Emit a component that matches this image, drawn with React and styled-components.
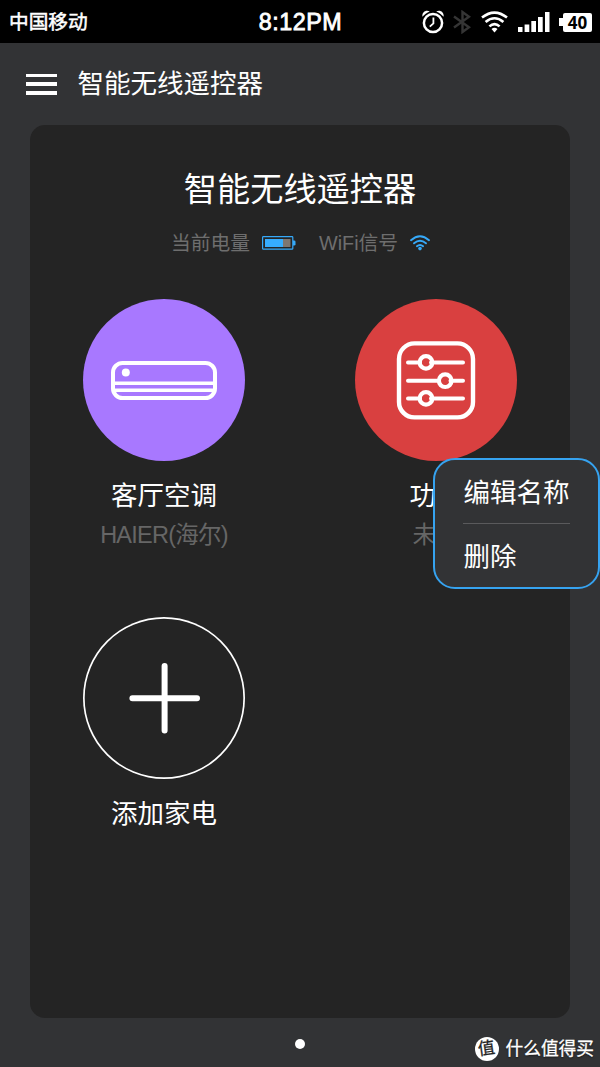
import React from 'react';
import styled, { createGlobalStyle } from 'styled-components';

const GlobalStyle = createGlobalStyle`
  * {
    box-sizing: border-box;
  }

  body {
    margin: 0;
    background-color: #323335;
    font-family: 'Liberation Sans', 'Noto Sans CJK SC', sans-serif;
  }
`;

const Screen = styled.div`
  width: 600px;
  height: 1067px;
  display: flex;
  flex-direction: column;
  position: relative;
  overflow: hidden;
  background-color: #323335;
  color: #ffffff;
  white-space: nowrap;
`;

const StatusBar = styled.div`
  height: 43px;
  padding: 0 8px 0 9px;
  display: grid;
  grid-template-columns: 1fr auto 1fr;
  align-items: center;
  background-color: #000000;
`;

const Carrier = styled.span`
  font-size: 19.7px;
  line-height: 43px;
  -webkit-text-stroke: 0.5px #ffffff;
`;

const Clock = styled.span`
  font-family: 'Liberation Sans', sans-serif;
  font-size: 23.3px;
  line-height: 45px;
  letter-spacing: 0.5px;
  -webkit-text-stroke: 0.8px #ffffff;
`;

const StatusIcons = styled.div`
  padding-bottom: 1px;
  display: flex;
  justify-content: flex-end;
  align-items: center;
`;

const Header = styled.header`
  height: 82px;
  padding: 0 26px;
  display: flex;
  align-items: center;
  gap: 20.5px;
`;

const MenuButton = styled.button`
  width: 31px;
  height: 21px;
  padding: 0;
  border: none;
  background: transparent;
  display: flex;
  flex-direction: column;
  justify-content: space-between;
`;

const MenuLine = styled.span`
  height: 3.5px;
  background-color: #ffffff;
`;

const HeaderTitle = styled.h1`
  margin: 0;
  font-size: 26.5px;
  line-height: 40px;
  font-weight: 400;
`;

const Card = styled.main`
  height: 893px;
  margin: 0 30px;
  padding-top: 40px;
  border-radius: 15px;
  background-color: #242424;
`;

const CardTitle = styled.h2`
  margin: 0;
  font-size: 33.2px;
  line-height: 50px;
  font-weight: 400;
  text-align: center;
`;

const DeviceInfo = styled.div`
  height: 30px;
  margin-top: 13px;
  padding-left: 141px;
  display: flex;
  align-items: center;
  color: #6e6e6e;
  font-size: 19.8px;
  line-height: 30px;
`;

const InfoItem = styled.div`
  width: ${(props) => props.$width}px;
  display: flex;
  align-items: center;
  gap: 12px;
`;

const Appliances = styled.div`
  margin: 41px 53px 0;
  display: grid;
  grid-template-columns: 162px 162px;
  grid-auto-rows: 318px;
  justify-content: space-between;
`;

const Appliance = styled.div`
  display: flex;
  flex-direction: column;
  align-items: center;
`;

const Circle = styled.div`
  width: 162px;
  height: 162px;
  flex: none;
  display: flex;
  align-items: center;
  justify-content: center;
  border-radius: 50%;
  background-color: ${(props) => props.$color || 'transparent'};
  box-shadow: ${(props) => (props.$outlined ? 'inset 0 0 0 1.7px #ffffff' : 'none')};
`;

const Name = styled.div`
  margin-top: 15px;
  font-size: 26.5px;
  line-height: 40px;
`;

const Brand = styled.div`
  font-size: 23.5px;
  line-height: 38px;
  letter-spacing: ${(props) => (props.$tight ? '-0.75px' : '0')};
  color: #666666;
`;

const Menu = styled.div`
  position: absolute;
  left: 433px;
  top: 458px;
  width: 167px;
  height: 131px;
  padding: 0 28px;
  border: 2px solid #36a3f0;
  border-radius: 22px;
  background-color: #323335;
`;

const MenuItem = styled.div`
  height: 63px;
  padding-left: 0.5px;
  font-size: 26.5px;
  line-height: 66px;

  & + & {
    border-top: 1px solid #5a5a5c;
  }
`;

const Footer = styled.footer`
  flex: 1;
  padding: 0 6px 0 0;
  display: grid;
  grid-template-columns: 1fr 10px 1fr;
  align-items: center;
`;

const PageDot = styled.span`
  grid-column: 2;
  width: 10px;
  height: 10px;
  margin: 3px 0 0 3px;
  border-radius: 50%;
  background-color: #ffffff;
`;

const Watermark = styled.div`
  padding-top: 12px;
  display: flex;
  align-items: center;
  justify-content: flex-end;
  gap: 7px;
  font-size: 17.7px;
  line-height: 26px;
  -webkit-text-stroke: 0.3px currentColor;
  text-shadow: 0 1px 2px rgba(0, 0, 0, 0.7);
`;

const Badge = styled.span`
  width: 24px;
  height: 24px;
  border-radius: 50%;
  background-color: #ffffff;
  color: #222222;
  font-size: 17px;
  line-height: 23px;
  text-align: center;
  text-shadow: none;
`;

const BadgeText = styled.span`
  display: inline-block;
  transform: rotate(-8deg);
`;

const BatteryBadge = styled.div`
  width: 33px;
  height: 19px;
  margin-left: 9px;
  display: flex;
  align-items: center;
`;

const BatteryTip = styled.span`
  width: 4px;
  height: 8px;
  background-color: #ffffff;
`;

const BatteryBody = styled.span`
  width: 29px;
  height: 19px;
  border-radius: 2px;
  background-color: #ffffff;
  color: #000000;
  font-family: 'Open Sans', 'Noto Sans', sans-serif;
  font-size: 17px;
  line-height: 19px;
  font-weight: 700;
  text-align: center;
`;

const AlarmIcon = () => (
  <svg width="22" height="24" viewBox="0 0 22 24" fill="none" stroke="#fff">
    <circle cx="11" cy="13" r="9.1" strokeWidth="2.5" />
    <path d="M11.4 7.5v5.8l-3.6 3.4" strokeWidth="1.8" />
    <path d="M0.4 6.8C-0.2 2.4 3.4-0.6 7.8 1.4C4.8 2.6 2.4 4.4 0.4 6.8zM21.6 6.8C22.2 2.4 18.6-0.6 14.2 1.4C17.2 2.6 19.6 4.4 21.6 6.8z" fill="#fff" stroke="none" />
  </svg>
);

const BluetoothIcon = () => (
  <svg width="18" height="24" viewBox="0 0 18 24" fill="none" stroke="#353535" strokeWidth="2.4" style={{ marginLeft: 9 }}>
    <path d="M1 6.5l15 10.8-6.5 4.7V2l6.5 4.7L1 17.5" />
  </svg>
);

const StatusWifiIcon = () => (
  <svg width="27" height="24" viewBox="0 0 27 24" fill="none" stroke="#fff" strokeWidth="2.6" style={{ marginLeft: 10 }}>
    <path d="M1 7.6Q13.5 -2.4 26 7.6" />
    <path d="M4.6 12.1Q13.5 4.4 22.4 12.1" />
    <path d="M8.4 16.4Q13.5 11.8 18.6 16.4" />
    <path d="M10.5 19Q13.5 16.6 16.5 19L13.5 22.4z" fill="#fff" stroke="none" />
  </svg>
);

const SignalIcon = () => (
  <svg width="32" height="20" viewBox="0 0 32 20" fill="#fff" style={{ marginLeft: 10 }}>
    <rect x="0" y="15" width="4.5" height="5" />
    <rect x="6.6" y="12.5" width="4.7" height="7.5" />
    <rect x="13.3" y="9" width="4.7" height="11" />
    <rect x="20" y="5" width="4.7" height="15" />
    <rect x="27" y="0" width="4.5" height="20" />
  </svg>
);

const BatteryIcon = () => (
  <svg width="34" height="14" viewBox="0 0 34 14">
    <rect x="0.6" y="0.6" width="30.2" height="12.6" rx="0.8" fill="none" stroke="#36a9f8" strokeWidth="1.2" />
    <rect x="3" y="3" width="18" height="8" fill="#36adff" />
    <rect x="21" y="3" width="7.5" height="8" fill="#7d7772" />
    <path d="M31 4.5h1.2a1.3 1.3 0 0 1 1.3 1.3v2.4a1.3 1.3 0 0 1-1.3 1.3H31z" fill="#36a9f8" />
  </svg>
);

const WifiIcon = () => (
  <svg width="20" height="16" viewBox="0 0 20 16" fill="none" stroke="#36a9f8" strokeWidth="1.9" strokeLinecap="round">
    <path d="M1 5.2Q10 -2.8 19 5.2" />
    <path d="M4 8.3Q10 3.1 16 8.3" />
    <path d="M6.9 11.2Q10 8.6 13.1 11.2" />
    <circle cx="10" cy="13.6" r="1.8" fill="#36a9f8" stroke="none" />
  </svg>
);

const AirConditionerIcon = () => (
  <svg width="106" height="40" viewBox="0 0 106 40" fill="none" stroke="#fff">
    <rect x="2" y="3" width="102" height="35" rx="9.5" strokeWidth="4" />
    <path d="M3 23.2h100M3 30.2h100" strokeWidth="3.6" />
    <circle cx="14.8" cy="12.4" r="4" fill="#fff" stroke="none" />
  </svg>
);

const SlidersIcon = () => (
  <svg width="80" height="80" viewBox="0 0 80 80" fill="none" stroke="#fff" strokeWidth="4" strokeLinecap="round">
    <rect x="3" y="3.4" width="74" height="74" rx="15.5" strokeWidth="4.4" />
    <path d="M12 22.4h12M35 22.4h32M12 40.7h31M54.5 40.7h12.5M12 58.4h12M35 58.4h32" />
    <circle cx="30" cy="22.4" r="6.3" strokeWidth="4.2" />
    <circle cx="49.2" cy="40.7" r="6.3" strokeWidth="4.2" />
    <circle cx="30" cy="58.4" r="6.3" strokeWidth="4.2" />
  </svg>
);

const PlusIcon = () => (
  <svg width="72" height="72" viewBox="0 0 72 72" fill="none" stroke="#fff" strokeWidth="6" strokeLinecap="round">
    <path d="M36.6 4v64.4M4.4 36.2h64.6" />
  </svg>
);

function App() {
  return (
    <>
      <GlobalStyle />
      <Screen>
        <StatusBar>
          <Carrier>中国移动</Carrier>
          <Clock>8:12PM</Clock>
          <StatusIcons>
            <AlarmIcon />
            <BluetoothIcon />
            <StatusWifiIcon />
            <SignalIcon />
            <BatteryBadge>
              <BatteryTip />
              <BatteryBody>40</BatteryBody>
            </BatteryBadge>
          </StatusIcons>
        </StatusBar>

        <Header>
          <MenuButton aria-label="menu">
            <MenuLine />
            <MenuLine />
            <MenuLine />
          </MenuButton>
          <HeaderTitle>智能无线遥控器</HeaderTitle>
        </Header>

        <Card>
          <CardTitle>智能无线遥控器</CardTitle>
          <DeviceInfo>
            <InfoItem $width={148}>
              当前电量 <BatteryIcon />
            </InfoItem>
            <InfoItem>
              WiFi信号 <WifiIcon />
            </InfoItem>
          </DeviceInfo>

          <Appliances>
            <Appliance>
              <Circle $color="#a878ff">
                <AirConditionerIcon />
              </Circle>
              <Name>客厅空调</Name>
              <Brand $tight>HAIER(海尔)</Brand>
            </Appliance>
            <Appliance>
              <Circle $color="#d94040">
                <SlidersIcon />
              </Circle>
              <Name>功能</Name>
              <Brand>未知</Brand>
            </Appliance>
            <Appliance>
              <Circle $outlined>
                <PlusIcon />
              </Circle>
              <Name>添加家电</Name>
            </Appliance>
          </Appliances>
        </Card>

        <Footer>
          <PageDot />
          <Watermark>
            <Badge>
              <BadgeText>值</BadgeText>
            </Badge>
            什么值得买
          </Watermark>
        </Footer>

        {/* Long-press menu of the second appliance */}
        <Menu>
          <MenuItem>编辑名称</MenuItem>
          <MenuItem>删除</MenuItem>
        </Menu>
      </Screen>
    </>
  );
}

export default App;
